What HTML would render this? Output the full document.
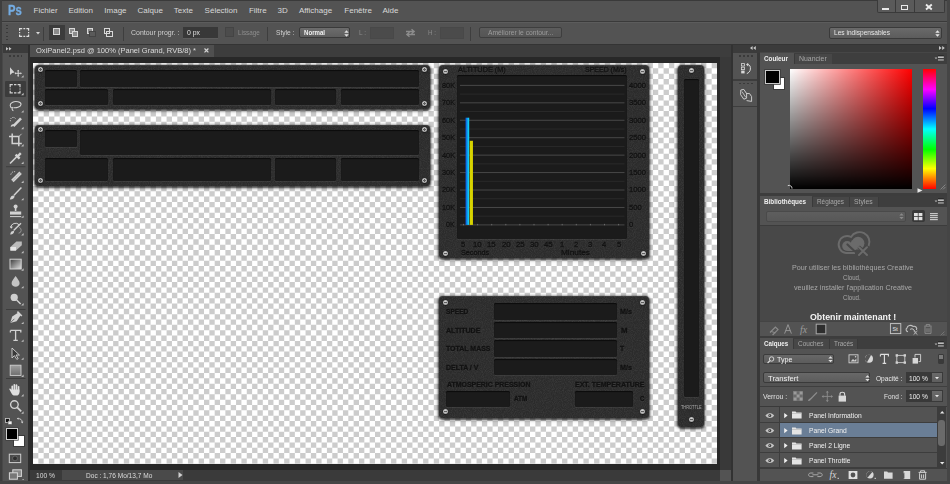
<!DOCTYPE html><html><head><meta charset="utf-8"><style>
*{box-sizing:border-box;margin:0;padding:0}
html,body{width:950px;height:484px;overflow:hidden;background:#535353}
body{position:relative;font-family:"Liberation Sans",sans-serif;font-size:8px;color:#d4d4d4}
.a{position:absolute}
svg.a{overflow:visible}
.t,.lb{position:absolute;white-space:nowrap;line-height:1;transform-origin:0 0}
.pn{position:absolute;background:#2b2b2b;border-radius:4px;box-shadow:0 1px 2px 1px rgba(0,0,0,.62),0 1px 4px 1px rgba(0,0,0,.25),inset 0 1px 0 rgba(255,255,255,.07)}
.sl{position:absolute;background:#1b1b1b;border-radius:1.5px;box-shadow:inset 0 1px 1px rgba(0,0,0,.6),0 1px 0 rgba(255,255,255,.06)}
.sc{position:absolute;width:5px;height:5px;border-radius:50%;background:radial-gradient(circle at 45% 40%,#d8d8d8,#a4a4a4 70%,#7a7a7a);box-shadow:0 0.5px 1.2px rgba(0,0,0,.85)}
.sc.h:before{content:"";position:absolute;left:1px;top:2px;width:3px;height:1px;background:#5e5e5e}
.sc.x:before{content:"";position:absolute;left:1px;top:2px;width:3px;height:1px;background:#5e5e5e}
.sc.x:after{content:"";position:absolute;left:2px;top:1px;width:1px;height:3px;background:#5e5e5e}
.sc.v:before{content:"";position:absolute;left:2px;top:1px;width:1px;height:3px;background:#6a6a6a}
.lb{color:#121212;-webkit-text-stroke:0.3px #121212;text-shadow:0 0.7px 0 rgba(255,255,255,.05)}
</style></head><body>
<div class="a" style="left:0px;top:0px;width:950px;height:1px;background:#3a3a3a;"></div>
<div class="a" style="left:0px;top:0px;width:2px;height:484px;background:#3e3e3e;"></div>
<div class="a" style="left:947px;top:0px;width:3px;height:484px;background:#454545;"></div>
<div class="a" style="left:0px;top:481px;width:950px;height:3px;background:#454545;"></div>
<div class="t" style="left:7.7px;top:2.85px;font-size:14px;color:#74ace2;font-weight:bold;transform:scaleX(0.806);-webkit-text-stroke:0.35px #74ace2;">Ps</div>
<div class="t" style="left:33.6px;top:7.23px;font-size:8px;color:#d8d8d8;">Fichier</div>
<div class="t" style="left:68.39999999999999px;top:7.23px;font-size:8px;color:#d8d8d8;">Edition</div>
<div class="t" style="left:104.3px;top:7.23px;font-size:8px;color:#d8d8d8;">Image</div>
<div class="t" style="left:137.5px;top:7.23px;font-size:8px;color:#d8d8d8;">Calque</div>
<div class="t" style="left:173.79999999999998px;top:7.23px;font-size:8px;color:#d8d8d8;">Texte</div>
<div class="t" style="left:204.6px;top:7.23px;font-size:8px;color:#d8d8d8;">Sélection</div>
<div class="t" style="left:248.9px;top:7.23px;font-size:8px;color:#d8d8d8;">Filtre</div>
<div class="t" style="left:277.5px;top:7.23px;font-size:8px;color:#d8d8d8;">3D</div>
<div class="t" style="left:298.90000000000003px;top:7.23px;font-size:8px;color:#d8d8d8;">Affichage</div>
<div class="t" style="left:344.3px;top:7.23px;font-size:8px;color:#d8d8d8;">Fenêtre</div>
<div class="t" style="left:382.40000000000003px;top:7.23px;font-size:8px;color:#d8d8d8;">Aide</div>
<div class="a" style="left:876.5px;top:0px;width:68.5px;height:12.5px;background:#5a5a5a;border:1px solid #3a3a3a;border-top:none;border-radius:0 0 2px 2px"></div>
<div class="a" style="left:895px;top:0px;width:1px;height:12.5px;background:#3a3a3a;"></div>
<div class="a" style="left:913.5px;top:0px;width:1px;height:12.5px;background:#3a3a3a;"></div>
<div class="a" style="left:882px;top:8px;width:7.3px;height:2px;background:#e8e8e8;"></div>
<div class="a" style="left:900.6px;top:5.2px;width:7.4px;height:5px;background:transparent;border:1.3px solid #e8e8e8;border-top-width:1.8px"></div>
<svg class="a" style="left:925px;top:4px" width="8" height="6"><path d="M1 0.6L6.8 5.4M6.8 0.6L1 5.4" stroke="#ececec" stroke-width="1.9"/></svg>
<div class="a" style="left:2px;top:21px;width:945px;height:1px;background:#3a3a3a;"></div>
<div class="a" style="left:2px;top:22px;width:945px;height:1px;background:#5c5c5c;"></div>
<div class="a" style="left:2px;top:44px;width:945px;height:1px;background:#343434;"></div>
<div class="a" style="left:6.4px;top:25.1px;width:1.4px;height:1.4px;background:#3a3a3a;"></div>
<div class="a" style="left:6.4px;top:28.1px;width:1.4px;height:1.4px;background:#3a3a3a;"></div>
<div class="a" style="left:6.4px;top:31.900000000000002px;width:1.4px;height:1.4px;background:#3a3a3a;"></div>
<div class="a" style="left:6.4px;top:35.699999999999996px;width:1.4px;height:1.4px;background:#3a3a3a;"></div>
<div class="a" style="left:6.4px;top:38.5px;width:1.4px;height:1.4px;background:#3a3a3a;"></div>
<svg class="a" style="left:18px;top:27px" width="12" height="11"><path d="M1.6 3.8V1.6H4.2M5.4 1.6H7.2M8.4 1.6H10.6V3.8M10.6 5V6.2M10.6 7.4V9.4H8.4M7.2 9.4H5.4M4.2 9.4H1.6V7.4M1.6 6.2V5" fill="none" stroke="#e0e0e0" stroke-width="1.2"/></svg>
<svg class="a" style="left:35.5px;top:31.5px" width="4" height="3"><path d="M0 0H4L2 2.5Z" fill="#d8d8d8"/></svg>
<div class="a" style="left:43.3px;top:26.5px;width:1px;height:14px;background:#3e3e3e;"></div>
<div class="a" style="left:49.2px;top:25.3px;width:15.4px;height:15.2px;background:#3b3b3b;"></div>
<div class="a" style="left:53px;top:28.2px;width:7px;height:6.5px;background:#8c8c8c;border:1px solid #d8d8d8"></div>
<div class="a" style="left:68.8px;top:28px;width:6.5px;height:5.8px;background:#8c8c8c;border:1px solid #d8d8d8"></div>
<div class="a" style="left:71.5px;top:30.8px;width:6.5px;height:6px;background:#8c8c8c;border:1px solid #d8d8d8"></div>
<div class="a" style="left:86.5px;top:28px;width:6.5px;height:5.8px;background:#8c8c8c;border:1px solid #d8d8d8"></div>
<div class="a" style="left:89.2px;top:30.8px;width:6.5px;height:6px;background:#5a5a5a;border:1px solid #444"></div>
<div class="a" style="left:103.8px;top:28px;width:6.5px;height:5.8px;background:transparent;border:1px solid #d8d8d8"></div>
<div class="a" style="left:106.3px;top:30.8px;width:6.5px;height:6px;background:transparent;border:1px solid #d8d8d8"></div>
<div class="a" style="left:123.3px;top:26.5px;width:1px;height:14px;background:#3e3e3e;"></div>
<div class="t" style="left:130.8px;top:29.12px;font-size:7px;color:#d0d0d0;transform:scaleX(0.995);">Contour progr. :</div>
<div class="a" style="left:183.4px;top:26.6px;width:34.8px;height:12px;background:#383838;border-bottom:1px solid #5d5d5d"></div>
<div class="t" style="left:186.6px;top:29.12px;font-size:7px;color:#e0e0e0;transform:scaleX(0.983);">0 px</div>
<div class="a" style="left:225.3px;top:27.4px;width:9px;height:9.6px;background:#4c4c4c;border:1px solid #444"></div>
<div class="t" style="left:238px;top:29.12px;font-size:7px;color:#8e8e8e;transform:scaleX(0.904);">Lissage</div>
<div class="a" style="left:267.3px;top:26.5px;width:1px;height:14px;background:#3e3e3e;"></div>
<div class="t" style="left:276px;top:29.12px;font-size:7px;color:#d0d0d0;transform:scaleX(0.951);">Style :</div>
<div class="a" style="left:299px;top:27px;width:51px;height:11.2px;background:linear-gradient(#6c6c6c,#5e5e5e);border:1px solid #3a3a3a;border-radius:2px"></div>
<div class="t" style="left:304px;top:29.12px;font-size:7px;color:#f0f0f0;font-weight:bold;transform:scaleX(0.871);">Normal</div>
<svg class="a" style="left:343.5px;top:29.5px" width="5" height="7"><path d="M0.3 2.8L2.5 0.3L4.7 2.8ZM0.3 4.2L2.5 6.7L4.7 4.2Z" fill="#e0e0e0"/></svg>
<div class="t" style="left:359.3px;top:29.12px;font-size:7px;color:#8a8a8a;transform:scaleX(0.931);">L :</div>
<div class="a" style="left:370.3px;top:27px;width:23.5px;height:11.5px;background:#4b4b4b;border:1px solid #484848"></div>
<svg class="a" style="left:404.5px;top:28px" width="11" height="10"><path d="M1 3.5H8.5M6.5 1.3L9.2 3.5L6.5 5.7M10 6.5H2.5M4.5 4.3L1.8 6.5L4.5 8.7" stroke="#8c8c8c" stroke-width="1.3" fill="none"/></svg>
<div class="t" style="left:427.7px;top:29.12px;font-size:7px;color:#8a8a8a;transform:scaleX(0.894);">H :</div>
<div class="a" style="left:440px;top:27px;width:24.2px;height:11.5px;background:#4b4b4b;border:1px solid #484848"></div>
<div class="a" style="left:470.4px;top:26.5px;width:1px;height:14px;background:#3e3e3e;"></div>
<div class="a" style="left:478.7px;top:26.7px;width:83.7px;height:11.5px;background:linear-gradient(#5c5c5c,#555);border:1px solid #3e3e3e;border-radius:2px"></div>
<div class="t" style="left:487.8px;top:29.12px;font-size:7px;color:#9c9c9c;transform:scaleX(0.959);">Améliorer le contour...</div>
<div class="a" style="left:829.1px;top:26.8px;width:112.7px;height:11.8px;background:linear-gradient(#6a6a6a,#5c5c5c);border:1px solid #3a3a3a;border-radius:2px"></div>
<div class="t" style="left:834.3px;top:29.37px;font-size:7px;color:#e8e8e8;transform:scaleX(0.941);">Les indispensables</div>
<svg class="a" style="left:935px;top:29.8px" width="5" height="7"><path d="M0.3 2.8L2.5 0.3L4.7 2.8ZM0.3 4.2L2.5 6.7L4.7 4.2Z" fill="#e8e8e8"/></svg>
<div class="a" style="left:28px;top:45px;width:703px;height:12px;background:#3d3d3d;"></div>
<div class="a" style="left:30px;top:45px;width:184px;height:12px;background:#4f4f4f;"></div>
<div class="t" style="left:36px;top:47.25px;font-size:7.5px;color:#dcdcdc;transform:scaleX(1.002);">OxiPanel2.psd @ 100% (Panel Grand, RVB/8) *</div>
<svg class="a" style="left:204.4px;top:48px" width="5" height="5"><path d="M0.5 0.5L4.4 4.4M4.4 0.5L0.5 4.4" stroke="#d4d4d4" stroke-width="1.2"/></svg>
<div class="a" style="left:2px;top:45px;width:26px;height:436px;background:#535353;border-left:1px solid #484848"></div>
<div class="a" style="left:3px;top:45px;width:25px;height:7.7px;background:#3b3b3b;"></div>
<svg class="a" style="left:5.7px;top:46.6px" width="6" height="4"><path d="M0 0L2.5 1.8L0 3.6ZM3 0L5.5 1.8L3 3.6Z" fill="#c8c8c8"/></svg>
<div class="a" style="left:8.9px;top:54.9px;width:1.9px;height:1.9px;background:#3a3a3a;"></div>
<div class="a" style="left:12.8px;top:54.9px;width:1.9px;height:1.9px;background:#3a3a3a;"></div>
<div class="a" style="left:16.7px;top:54.9px;width:1.9px;height:1.9px;background:#3a3a3a;"></div>
<div class="a" style="left:20.6px;top:54.9px;width:1.9px;height:1.9px;background:#3a3a3a;"></div>
<div class="a" style="left:28px;top:45px;width:2px;height:436px;background:#2e2e2e;"></div>
<div class="a" style="left:30px;top:57px;width:701px;height:413px;background:#282828;"></div>
<div class="a" style="left:720px;top:57px;width:11px;height:413px;background:#393939;"></div>
<svg class="a" style="left:33px;top:63px;overflow:hidden" width="684" height="401"><rect width="684" height="401" fill="#fff"/><path fill="#cccccc" fill-rule="evenodd" d="M5.344 0h5.344v401h-5.344zM16.032 0h5.344v401h-5.344zM26.720 0h5.344v401h-5.344zM37.408 0h5.344v401h-5.344zM48.096 0h5.344v401h-5.344zM58.784 0h5.344v401h-5.344zM69.472 0h5.344v401h-5.344zM80.160 0h5.344v401h-5.344zM90.848 0h5.344v401h-5.344zM101.536 0h5.344v401h-5.344zM112.224 0h5.344v401h-5.344zM122.912 0h5.344v401h-5.344zM133.600 0h5.344v401h-5.344zM144.288 0h5.344v401h-5.344zM154.976 0h5.344v401h-5.344zM165.664 0h5.344v401h-5.344zM176.352 0h5.344v401h-5.344zM187.040 0h5.344v401h-5.344zM197.728 0h5.344v401h-5.344zM208.416 0h5.344v401h-5.344zM219.104 0h5.344v401h-5.344zM229.792 0h5.344v401h-5.344zM240.480 0h5.344v401h-5.344zM251.168 0h5.344v401h-5.344zM261.856 0h5.344v401h-5.344zM272.544 0h5.344v401h-5.344zM283.232 0h5.344v401h-5.344zM293.920 0h5.344v401h-5.344zM304.608 0h5.344v401h-5.344zM315.296 0h5.344v401h-5.344zM325.984 0h5.344v401h-5.344zM336.672 0h5.344v401h-5.344zM347.360 0h5.344v401h-5.344zM358.048 0h5.344v401h-5.344zM368.736 0h5.344v401h-5.344zM379.424 0h5.344v401h-5.344zM390.112 0h5.344v401h-5.344zM400.800 0h5.344v401h-5.344zM411.488 0h5.344v401h-5.344zM422.176 0h5.344v401h-5.344zM432.864 0h5.344v401h-5.344zM443.552 0h5.344v401h-5.344zM454.240 0h5.344v401h-5.344zM464.928 0h5.344v401h-5.344zM475.616 0h5.344v401h-5.344zM486.304 0h5.344v401h-5.344zM496.992 0h5.344v401h-5.344zM507.680 0h5.344v401h-5.344zM518.368 0h5.344v401h-5.344zM529.056 0h5.344v401h-5.344zM539.744 0h5.344v401h-5.344zM550.432 0h5.344v401h-5.344zM561.120 0h5.344v401h-5.344zM571.808 0h5.344v401h-5.344zM582.496 0h5.344v401h-5.344zM593.184 0h5.344v401h-5.344zM603.872 0h5.344v401h-5.344zM614.560 0h5.344v401h-5.344zM625.248 0h5.344v401h-5.344zM635.936 0h5.344v401h-5.344zM646.624 0h5.344v401h-5.344zM657.312 0h5.344v401h-5.344zM668.000 0h5.344v401h-5.344zM678.688 0h5.344v401h-5.344zM0 5.344h684v5.344h-684zM0 16.032h684v5.344h-684zM0 26.720h684v5.344h-684zM0 37.408h684v5.344h-684zM0 48.096h684v5.344h-684zM0 58.784h684v5.344h-684zM0 69.472h684v5.344h-684zM0 80.160h684v5.344h-684zM0 90.848h684v5.344h-684zM0 101.536h684v5.344h-684zM0 112.224h684v5.344h-684zM0 122.912h684v5.344h-684zM0 133.600h684v5.344h-684zM0 144.288h684v5.344h-684zM0 154.976h684v5.344h-684zM0 165.664h684v5.344h-684zM0 176.352h684v5.344h-684zM0 187.040h684v5.344h-684zM0 197.728h684v5.344h-684zM0 208.416h684v5.344h-684zM0 219.104h684v5.344h-684zM0 229.792h684v5.344h-684zM0 240.480h684v5.344h-684zM0 251.168h684v5.344h-684zM0 261.856h684v5.344h-684zM0 272.544h684v5.344h-684zM0 283.232h684v5.344h-684zM0 293.920h684v5.344h-684zM0 304.608h684v5.344h-684zM0 315.296h684v5.344h-684zM0 325.984h684v5.344h-684zM0 336.672h684v5.344h-684zM0 347.360h684v5.344h-684zM0 358.048h684v5.344h-684zM0 368.736h684v5.344h-684zM0 379.424h684v5.344h-684zM0 390.112h684v5.344h-684zM0 400.800h684v5.344h-684z"/></svg>
<div class="a" style="left:30px;top:470px;width:701px;height:11px;background:#3a3a3a;"></div>
<div class="a" style="left:62px;top:470px;width:121px;height:10px;background:#4a4a4a;"></div>
<div class="a" style="left:720px;top:470px;width:11px;height:10.5px;background:#535353;"></div>
<div class="t" style="left:36.4px;top:471.87px;font-size:7px;color:#dcdcdc;transform:scaleX(0.957);">100 %</div>
<div class="t" style="left:86px;top:471.87px;font-size:7px;color:#dcdcdc;transform:scaleX(0.936);">Doc : 1,76 Mo/13,7 Mo</div>
<svg class="a" style="left:178px;top:472px" width="5" height="6"><path d="M0.5 0L4.5 3L0.5 6Z" fill="#d0d0d0"/></svg>
<div class="a" style="left:731px;top:45px;width:2px;height:436px;background:#323232;"></div>
<div class="a" style="left:733px;top:45px;width:214px;height:7.8px;background:#3b3b3b;"></div>
<div class="a" style="left:757px;top:53px;width:3px;height:428px;background:#383838;"></div>
<div class="a" style="left:5px;top:81.4px;width:21px;height:15.5px;background:#3c3c3c;border-radius:1px"></div>
<svg class="a" style="left:0;top:0" width="30" height="484"><path d="M23.6 75.2V77.6H21.2Z" fill="#c0c0c0"/><path d="M23.6 92.8V95.2H21.2Z" fill="#c0c0c0"/><path d="M23.6 110.2V112.6H21.2Z" fill="#c0c0c0"/><path d="M23.6 126.8V129.2H21.2Z" fill="#c0c0c0"/><path d="M23.6 144.0V146.4H21.2Z" fill="#c0c0c0"/><path d="M23.6 161.6V164.0H21.2Z" fill="#c0c0c0"/><path d="M23.6 180.5V182.9H21.2Z" fill="#c0c0c0"/><path d="M23.6 197.9V200.3H21.2Z" fill="#c0c0c0"/><path d="M23.6 215.4V217.8H21.2Z" fill="#c0c0c0"/><path d="M23.6 233.0V235.4H21.2Z" fill="#c0c0c0"/><path d="M23.6 250.8V253.2H21.2Z" fill="#c0c0c0"/><path d="M23.6 268.3V270.7H21.2Z" fill="#c0c0c0"/><path d="M23.6 285.9V288.3H21.2Z" fill="#c0c0c0"/><path d="M23.6 303.0V305.4H21.2Z" fill="#c0c0c0"/><path d="M23.6 321.7V324.1H21.2Z" fill="#c0c0c0"/><path d="M23.6 339.4V341.8H21.2Z" fill="#c0c0c0"/><path d="M23.6 357.4V359.8H21.2Z" fill="#c0c0c0"/><path d="M23.6 374.6V377.0H21.2Z" fill="#c0c0c0"/><path d="M23.6 394.1V396.5H21.2Z" fill="#c0c0c0"/><path d="M23.6 411.3V413.7H21.2Z" fill="#c0c0c0"/><path d="M10 67.2V75L12.2 72.9L14.6 72.6Z" fill="#d2d2d2" stroke="none" stroke-width="1.2" /><path d="M15 73.3H21.4M18.2 70.2V76.4" fill="none" stroke="#d2d2d2" stroke-width="1" /><path d="M14.6 73.3L16 72.2V74.4ZM21.8 73.3L20.4 72.2V74.4ZM18.2 69.8L17.1 71.2H19.3ZM18.2 76.8L17.1 75.4H19.3Z" fill="#d2d2d2" stroke="none" stroke-width="1.2" /><path d="M10.2 87.2V84.6H12.8M14 84.6H16.4M17.6 84.6H20V87.2M20 88.4V89.6M20 90.8V92.8H17.6M16.4 92.8H14M12.8 92.8H10.2V90.8M10.2 89.6V88.4" fill="none" stroke="#d2d2d2" stroke-width="1.2" /><path d="M12.6 108.3C9.5 107.5 9.4 103.8 12.2 102.4C15.5 100.6 21.5 101.6 21 104.6C20.6 107.2 16 108 13.5 107.6M12.8 107.2C11.6 108.4 12 110.2 13.4 110.6" fill="none" stroke="#d2d2d2" stroke-width="1.1" /><path d="M10.5 121.2A2.8 2.8 0 0 1 16 119.4" fill="none" stroke="#d2d2d2" stroke-width="1" stroke-dasharray="1.2 1"/><path d="M13.4 126.2L21 118.4" fill="none" stroke="#d2d2d2" stroke-width="2.6" /><path d="M10.6 126.6C11.4 124.4 12.6 123.8 14 124.6C13.4 126.2 12.2 127 10.6 126.6Z" fill="#d2d2d2" stroke="none" stroke-width="1.2" /><path d="M12.2 133.5V143.6H21.8M9 136.6H18.8V146.2" fill="none" stroke="#d2d2d2" stroke-width="1.5" /><path d="M18.8 136.6L21.6 133.8" fill="none" stroke="#d2d2d2" stroke-width="0.8" /><path d="M10 163.5L17.2 156.2" fill="none" stroke="#d2d2d2" stroke-width="1.6" /><path d="M15.6 154.6L19.6 158.6M17.5 156.5L20.8 153.2" fill="none" stroke="#d2d2d2" stroke-width="2.4" /><rect x="6" y="166.3" width="19.5" height="0.9" fill="#3c3c3c"/><path d="M10.8 174.6A3.6 3.6 0 0 1 15.4 171.8" fill="none" stroke="#d2d2d2" stroke-width="1" stroke-dasharray="1.2 1"/><path d="M12.4 181L20.6 172.8" fill="none" stroke="#d2d2d2" stroke-width="3.4" /><path d="M12.4 181L20.6 172.8" fill="none" stroke="#8a8a8a" stroke-width="0.8" stroke-dasharray="0.8 0.8"/><path d="M14 195.2L21.4 187.6" fill="none" stroke="#d2d2d2" stroke-width="1.5" /><path d="M9.8 199.6C10.4 196.6 11.8 195 14.6 195.6C14.8 198.2 12.6 199.8 9.8 199.6Z" fill="#d2d2d2" stroke="none" stroke-width="1.2" /><circle cx="15.6" cy="206.4" r="2" fill="#d2d2d2"/><path d="M14.8 208H16.4V211H14.8Z" fill="#d2d2d2" stroke="none" stroke-width="1.2" /><path d="M10 211.5H21.2V214.6H10Z" fill="#d2d2d2" stroke="none" stroke-width="1.2" /><path d="M10 216.6H21.2" fill="none" stroke="#d2d2d2" stroke-width="1" /><path d="M10.6 227.5A5 5 0 0 1 19.2 224.8" fill="none" stroke="#d2d2d2" stroke-width="1" /><path d="M9.8 226.2L11.2 228.8L13 226.8Z" fill="#d2d2d2" stroke="none" stroke-width="1.2" /><path d="M13.6 230.6L21 223.2" fill="none" stroke="#d2d2d2" stroke-width="1.4" /><path d="M10.2 234.4C10.6 231.8 12 230.6 14.2 231.2C14.2 233.4 12.4 234.6 10.2 234.4Z" fill="#d2d2d2" stroke="none" stroke-width="1.2" /><path d="M18.6 233.2A3 3 0 0 0 19.2 227.4" fill="none" stroke="#9a9a9a" stroke-width="0.9" /><path d="M10.4 247L16.4 241.6H21.8V245.2L16 250.6H10.4Z" fill="#bcbcbc" stroke="none" stroke-width="1.2" /><path d="M10.4 247H16V250.6H10.4Z" fill="#e6e6e6" stroke="none" stroke-width="1.2" /><defs><linearGradient id="gr" x1="0" y1="0" x2="1" y2="1"><stop offset="0" stop-color="#3a3a3a"/><stop offset="1" stop-color="#e0e0e0"/></linearGradient><linearGradient id="rc" x1="0" y1="0" x2="0" y2="1"><stop offset="0" stop-color="#a0a0a0"/><stop offset="1" stop-color="#6e6e6e"/></linearGradient></defs><rect x="10" y="259.2" width="11.2" height="9.8" fill="url(#gr)" stroke="#d2d2d2" stroke-width="1"/><path d="M15.6 276C13.6 279 11.6 281 11.6 283.2C11.6 285.4 13.4 286.8 15.6 286.8C17.8 286.8 19.6 285.4 19.6 283.2C19.6 281 17.6 279 15.6 276Z" fill="#c4c4c4" stroke="none" stroke-width="1.2" /><circle cx="14.2" cy="297.4" r="3.6" fill="#cfcfcf"/><path d="M16.6 300L20.6 304" fill="none" stroke="#d2d2d2" stroke-width="1.4" /><rect x="6" y="309" width="19.5" height="0.9" fill="#3c3c3c"/><path d="M10.2 323L12.2 316.6L18.4 312.6L20.8 315L16.6 321.2Z" fill="#d2d2d2" stroke="none" stroke-width="1.2" /><path d="M10.4 322.8L14.4 318.8" fill="none" stroke="#535353" stroke-width="0.8" /><path d="M17.4 311.6L21.8 316" fill="none" stroke="#d2d2d2" stroke-width="1.6" /><path d="M10.4 330.4H20.8V332.6M10.4 330.4V332.6M15.6 330.4V340.4M13.4 340.4H17.8" fill="none" stroke="#d2d2d2" stroke-width="1.3" /><path d="M12 348V358L14.4 355.6L16.8 359.4L18.2 358.6L16 355H19.4Z" fill="#3a3a3a" stroke="#d2d2d2" stroke-width="0.9" /><rect x="10.2" y="365.2" width="10.8" height="10.2" fill="url(#rc)" stroke="#d0d0d0" stroke-width="0.9"/><rect x="6" y="378" width="19.5" height="0.9" fill="#3c3c3c"/><g fill="#dedede"><rect x="11.4" y="385.6" width="1.7" height="6.5" rx="0.85"/><rect x="13.5" y="384" width="1.7" height="7.5" rx="0.85"/><rect x="15.6" y="384.3" width="1.7" height="7.5" rx="0.85"/><rect x="17.7" y="386" width="1.7" height="6.5" rx="0.85"/><path d="M11.4 389.5H19.4V392.4C19.4 394.4 18 395.6 16.2 395.6H14.6C13.2 395.6 12.4 394.8 11.6 393.4L9.4 389.6C9 388.8 9.8 388.2 10.5 388.8L11.6 390Z"/></g><circle cx="14.4" cy="404.6" r="3.8" fill="none" stroke="#d2d2d2" stroke-width="1.4"/><path d="M17.2 407.4L21.2 411.4" fill="none" stroke="#d2d2d2" stroke-width="1.8" /><rect x="5.4" y="418.4" width="4" height="4" fill="#111" stroke="#ccc" stroke-width="0.8"/><rect x="8" y="421" width="4" height="3.6" fill="#eee" stroke="#444" stroke-width="0.6"/><path d="M17.8 418.6C20.4 418.6 22.2 419.6 22.2 422.4" fill="none" stroke="#d2d2d2" stroke-width="0.9" /><path d="M16.8 418.6L18.4 417.4V419.8Z M21 421.8H23.4L22.2 423.6Z" fill="#d2d2d2" stroke="none" stroke-width="0.5" /><rect x="9.3" y="454.2" width="11.4" height="8.4" fill="#4a4a4a" stroke="#d0d0d0" stroke-width="1"/><circle cx="15" cy="458.4" r="2.4" fill="#2e2e2e" stroke="#888" stroke-width="0.5"/><rect x="12.8" y="469.8" width="8.6" height="6.6" fill="#888" stroke="#d8d8d8" stroke-width="1"/><rect x="9.4" y="472.8" width="8" height="6.4" fill="#777" stroke="#d8d8d8" stroke-width="1"/><rect x="22.6" y="479" width="1" height="1" fill="#ccc"/></svg>
<div class="a" style="left:12.7px;top:435px;width:12.2px;height:12.3px;background:#fff;border:1px solid #3a3a3a"></div>
<div class="a" style="left:5.8px;top:428.2px;width:12.3px;height:12.3px;background:#000;border:1px solid #d0d0d0;box-shadow:0 0 0 0.6px #3a3a3a"></div>
<svg width="0" height="0" style="position:absolute"><filter id="nz" x="0" y="0" width="100%" height="100%"><feTurbulence type="fractalNoise" baseFrequency="1.1" numOctaves="1" seed="3"/><feColorMatrix values="0 0 0 0 1  0 0 0 0 1  0 0 0 0 1  0.16 0 0 0 -0.06"/></filter></svg>
<div class="pn" style="left:35px;top:65px;width:395.40px;height:43.80px"><svg width="100%" height="100%" style="position:absolute;left:0;top:0;border-radius:4px"><rect width="100%" height="100%" filter="url(#nz)" rx="4"/></svg></div>
<div class="sl" style="left:45px;top:69.8px;width:32.00px;height:16.80px"></div>
<div class="sl" style="left:79.7px;top:69.8px;width:339.80px;height:16.80px"></div>
<div class="sl" style="left:45px;top:88.6px;width:63.00px;height:16.60px"></div>
<div class="sl" style="left:113px;top:88.6px;width:157.50px;height:16.60px"></div>
<div class="sl" style="left:274.8px;top:88.6px;width:60.80px;height:16.60px"></div>
<div class="sl" style="left:340.8px;top:88.6px;width:78.70px;height:16.60px"></div>
<div class="sc x" style="left:38.00px;top:67.30px"></div>
<div class="sc x" style="left:38.00px;top:101.30px"></div>
<div class="sc x" style="left:421.90px;top:67.30px"></div>
<div class="sc x" style="left:421.90px;top:101.30px"></div>
<div class="pn" style="left:35px;top:125.4px;width:395.40px;height:60.30px"><svg width="100%" height="100%" style="position:absolute;left:0;top:0;border-radius:4px"><rect width="100%" height="100%" filter="url(#nz)" rx="4"/></svg></div>
<div class="sl" style="left:45px;top:130px;width:32.00px;height:16.50px"></div>
<div class="sl" style="left:79.7px;top:129.8px;width:339.80px;height:25.40px"></div>
<div class="sl" style="left:45px;top:157.6px;width:63.00px;height:23.60px"></div>
<div class="sl" style="left:113px;top:157.6px;width:157.50px;height:23.60px"></div>
<div class="sl" style="left:274.8px;top:157.6px;width:60.80px;height:23.60px"></div>
<div class="sl" style="left:340.8px;top:157.6px;width:78.70px;height:23.60px"></div>
<div class="sc x" style="left:38.00px;top:127.10px"></div>
<div class="sc x" style="left:38.00px;top:177.80px"></div>
<div class="sc x" style="left:421.90px;top:127.10px"></div>
<div class="sc x" style="left:421.90px;top:177.80px"></div>
<div class="pn" style="left:438.6px;top:64.6px;width:210.00px;height:193.20px"><svg width="100%" height="100%" style="position:absolute;left:0;top:0;border-radius:4px"><rect width="100%" height="100%" filter="url(#nz)" rx="4"/></svg></div>
<div class="sl" style="left:457.2px;top:75.2px;width:169.60px;height:163.60px"></div>
<svg class="a" style="left:0;top:0" width="950" height="484"><rect x="460" y="224.40" width="164.5" height="1" fill="#484848"/><rect x="460" y="215.68" width="164.5" height="1" fill="#2a2a2a"/><rect x="460" y="206.96" width="164.5" height="1" fill="#484848"/><rect x="460" y="198.24" width="164.5" height="1" fill="#2a2a2a"/><rect x="460" y="189.52" width="164.5" height="1" fill="#484848"/><rect x="460" y="180.80" width="164.5" height="1" fill="#2a2a2a"/><rect x="460" y="172.08" width="164.5" height="1" fill="#484848"/><rect x="460" y="163.36" width="164.5" height="1" fill="#2a2a2a"/><rect x="460" y="154.64" width="164.5" height="1" fill="#484848"/><rect x="460" y="145.92" width="164.5" height="1" fill="#2a2a2a"/><rect x="460" y="137.20" width="164.5" height="1" fill="#484848"/><rect x="460" y="128.48" width="164.5" height="1" fill="#2a2a2a"/><rect x="460" y="119.76" width="164.5" height="1" fill="#484848"/><rect x="460" y="111.04" width="164.5" height="1" fill="#2a2a2a"/><rect x="460" y="102.32" width="164.5" height="1" fill="#484848"/><rect x="460" y="93.60" width="164.5" height="1" fill="#2a2a2a"/><rect x="460" y="84.88" width="164.5" height="1" fill="#484848"/><rect x="463.00" y="223.9" width="1" height="1.4" fill="#6a6a6a"/><rect x="477.10" y="223.9" width="1" height="1.4" fill="#6a6a6a"/><rect x="491.20" y="223.9" width="1" height="1.4" fill="#6a6a6a"/><rect x="505.30" y="223.9" width="1" height="1.4" fill="#6a6a6a"/><rect x="519.40" y="223.9" width="1" height="1.4" fill="#6a6a6a"/><rect x="533.50" y="223.9" width="1" height="1.4" fill="#6a6a6a"/><rect x="547.60" y="223.9" width="1" height="1.4" fill="#6a6a6a"/><rect x="561.70" y="223.9" width="1" height="1.4" fill="#6a6a6a"/><rect x="575.80" y="223.9" width="1" height="1.4" fill="#6a6a6a"/><rect x="589.90" y="223.9" width="1" height="1.4" fill="#6a6a6a"/><rect x="604.00" y="223.9" width="1" height="1.4" fill="#6a6a6a"/><rect x="618.10" y="223.9" width="1" height="1.4" fill="#6a6a6a"/><defs><linearGradient id="bl" x1="0" x2="1"><stop offset="0" stop-color="#0a4fd8"/><stop offset="1" stop-color="#12e6ff"/></linearGradient><linearGradient id="yl" x1="0" x2="1"><stop offset="0" stop-color="#9c9a00"/><stop offset=".3" stop-color="#e0dc00"/><stop offset="1" stop-color="#c8c400"/></linearGradient></defs><rect x="465.5" y="117.7" width="3.7" height="107.2" fill="url(#bl)"/><rect x="469.6" y="140.8" width="3.4" height="84.1" fill="url(#yl)"/></svg>
<div class="lb" style="left:457.7px;top:66.48px;font-size:7.5px;color:#121212;transform:scaleX(0.975);">ALTITUDE (M)</div>
<div class="lb" style="left:585.0px;top:66.48px;font-size:7.5px;color:#121212;transform:scaleX(0.931);">SPEED (M/s)</div>
<div class="lb" style="left:446.29999999999995px;top:221.28px;font-size:7.5px;color:#121212;transform:scaleX(0.937);">0K</div>
<div class="lb" style="left:441.9px;top:203.84px;font-size:7.5px;color:#121212;transform:scaleX(0.974);">10K</div>
<div class="lb" style="left:441.9px;top:186.41px;font-size:7.5px;color:#121212;transform:scaleX(0.974);">20K</div>
<div class="lb" style="left:441.9px;top:168.96px;font-size:7.5px;color:#121212;transform:scaleX(0.974);">30K</div>
<div class="lb" style="left:441.9px;top:151.52px;font-size:7.5px;color:#121212;transform:scaleX(0.974);">40K</div>
<div class="lb" style="left:441.9px;top:134.08px;font-size:7.5px;color:#121212;transform:scaleX(0.974);">50K</div>
<div class="lb" style="left:441.9px;top:116.64px;font-size:7.5px;color:#121212;transform:scaleX(0.974);">60K</div>
<div class="lb" style="left:441.9px;top:99.20px;font-size:7.5px;color:#121212;transform:scaleX(0.974);">70K</div>
<div class="lb" style="left:441.9px;top:81.77px;font-size:7.5px;color:#121212;transform:scaleX(0.974);">80K</div>
<div class="lb" style="left:629.3px;top:221.28px;font-size:7.5px;color:#121212;transform:scaleX(1.007);">0</div>
<div class="lb" style="left:629.3px;top:203.84px;font-size:7.5px;color:#121212;transform:scaleX(1.007);">500</div>
<div class="lb" style="left:629.3px;top:186.41px;font-size:7.5px;color:#121212;transform:scaleX(1.019);">1000</div>
<div class="lb" style="left:629.3px;top:168.96px;font-size:7.5px;color:#121212;transform:scaleX(1.019);">1500</div>
<div class="lb" style="left:629.3px;top:151.52px;font-size:7.5px;color:#121212;transform:scaleX(1.019);">2000</div>
<div class="lb" style="left:629.3px;top:134.08px;font-size:7.5px;color:#121212;transform:scaleX(1.019);">2500</div>
<div class="lb" style="left:629.3px;top:116.64px;font-size:7.5px;color:#121212;transform:scaleX(1.019);">3000</div>
<div class="lb" style="left:629.3px;top:99.20px;font-size:7.5px;color:#121212;transform:scaleX(1.019);">3500</div>
<div class="lb" style="left:629.3px;top:81.77px;font-size:7.5px;color:#121212;transform:scaleX(1.019);">4000</div>
<div class="lb" style="left:461.4px;top:240.88px;font-size:7.5px;color:#121212;transform:scaleX(1.007);">5</div>
<div class="lb" style="left:473.3px;top:240.88px;font-size:7.5px;color:#121212;transform:scaleX(1.031);">10</div>
<div class="lb" style="left:487.4px;top:240.88px;font-size:7.5px;color:#121212;transform:scaleX(1.031);">15</div>
<div class="lb" style="left:501.5px;top:240.88px;font-size:7.5px;color:#121212;transform:scaleX(1.031);">20</div>
<div class="lb" style="left:515.6px;top:240.88px;font-size:7.5px;color:#121212;transform:scaleX(1.031);">25</div>
<div class="lb" style="left:529.7px;top:240.88px;font-size:7.5px;color:#121212;transform:scaleX(1.031);">30</div>
<div class="lb" style="left:543.8000000000001px;top:240.88px;font-size:7.5px;color:#121212;transform:scaleX(1.031);">45</div>
<div class="lb" style="left:560.1px;top:240.88px;font-size:7.5px;color:#121212;transform:scaleX(1.007);">1</div>
<div class="lb" style="left:574.1999999999999px;top:240.88px;font-size:7.5px;color:#121212;transform:scaleX(1.007);">2</div>
<div class="lb" style="left:588.3px;top:240.88px;font-size:7.5px;color:#121212;transform:scaleX(1.007);">3</div>
<div class="lb" style="left:602.4px;top:240.88px;font-size:7.5px;color:#121212;transform:scaleX(1.007);">4</div>
<div class="lb" style="left:616.5px;top:240.88px;font-size:7.5px;color:#121212;transform:scaleX(1.007);">5</div>
<div class="lb" style="left:460.6px;top:248.98px;font-size:7.5px;color:#121212;transform:scaleX(0.963);">Seconds</div>
<div class="lb" style="left:560.7px;top:248.98px;font-size:7.5px;color:#121212;transform:scaleX(1.100);">Minutes</div>
<div class="sc h" style="left:442.80px;top:68.50px"></div>
<div class="sc h" style="left:640.30px;top:68.50px"></div>
<div class="sc h" style="left:443.20px;top:250.60px"></div>
<div class="sc h" style="left:640.80px;top:250.60px"></div>
<div class="pn" style="left:438.5px;top:296.4px;width:210.50px;height:121.40px"><svg width="100%" height="100%" style="position:absolute;left:0;top:0;border-radius:4px"><rect width="100%" height="100%" filter="url(#nz)" rx="4"/></svg></div>
<div class="sl" style="left:494.1px;top:303.1px;width:122.60px;height:16.60px"></div>
<div class="sl" style="left:494.1px;top:321.9px;width:122.60px;height:15.90px"></div>
<div class="sl" style="left:494.1px;top:340.4px;width:122.60px;height:16.20px"></div>
<div class="sl" style="left:494.1px;top:359px;width:122.60px;height:16.40px"></div>
<div class="sl" style="left:446px;top:391px;width:63.70px;height:15.60px"></div>
<div class="sl" style="left:574.9px;top:390.9px;width:57.90px;height:15.80px"></div>
<div class="lb" style="left:445.6px;top:307.88px;font-size:7.5px;color:#121212;font-weight:bold;transform:scaleX(0.877);">SPEED</div>
<div class="lb" style="left:445.6px;top:326.99px;font-size:7.5px;color:#121212;font-weight:bold;transform:scaleX(0.942);">ALTITUDE</div>
<div class="lb" style="left:445.6px;top:345.08px;font-size:7.5px;color:#121212;font-weight:bold;transform:scaleX(0.927);">TOTAL MASS</div>
<div class="lb" style="left:445.6px;top:363.69px;font-size:7.5px;color:#121212;font-weight:bold;transform:scaleX(0.929);">DELTA / V</div>
<div class="lb" style="left:446.5px;top:380.69px;font-size:7.5px;color:#121212;font-weight:bold;transform:scaleX(0.925);">ATMOSPERIC PRESSION</div>
<div class="lb" style="left:514.3px;top:395.08px;font-size:7.5px;color:#121212;font-weight:bold;transform:scaleX(0.841);">ATM</div>
<div class="lb" style="left:574.9px;top:381.08px;font-size:7.5px;color:#121212;font-weight:bold;transform:scaleX(0.933);">EXT. TEMPERATURE</div>
<div class="lb" style="left:639.6px;top:395.19px;font-size:7.5px;color:#121212;font-weight:bold;transform:scaleX(0.812);">C</div>
<div class="lb" style="left:620px;top:308.08px;font-size:7.5px;color:#121212;font-weight:bold;transform:scaleX(0.960);">M/s</div>
<div class="lb" style="left:620.5px;top:327.19px;font-size:7.5px;color:#121212;font-weight:bold;transform:scaleX(1.040);">M</div>
<div class="lb" style="left:620px;top:344.99px;font-size:7.5px;color:#121212;font-weight:bold;transform:scaleX(0.917);">T</div>
<div class="lb" style="left:620px;top:364.38px;font-size:7.5px;color:#121212;font-weight:bold;transform:scaleX(0.960);">M/s</div>
<div class="sc h" style="left:442.70px;top:300.20px"></div>
<div class="sc h" style="left:640.30px;top:300.20px"></div>
<div class="sc h" style="left:442.90px;top:408.90px"></div>
<div class="sc h" style="left:640.30px;top:408.90px"></div>
<div class="pn" style="left:678px;top:64.7px;width:26.00px;height:362.40px"><svg width="100%" height="100%" style="position:absolute;left:0;top:0;border-radius:4px"><rect width="100%" height="100%" filter="url(#nz)" rx="4"/></svg></div>
<div class="sl" style="left:683.6px;top:78.8px;width:15.00px;height:317.90px"></div>
<div class="t" style="left:681px;top:404.59px;font-size:5px;color:#a8a8a8;transform:scaleX(0.777);">THROTTLE</div>
<div class="sc h" style="left:688.50px;top:68.10px"></div>
<div class="sc h" style="left:688.50px;top:417.40px"></div>
<svg class="a" style="left:749.5px;top:46px" width="6" height="4"><path d="M2.6 0L0 2L2.6 4ZM5.8 0L3.2 2L5.8 4Z" fill="#c8c8c8"/></svg>
<svg class="a" style="left:938.5px;top:46px" width="6" height="4"><path d="M0 0L2.6 2L0 4ZM3.2 0L5.8 2L3.2 4Z" fill="#c8c8c8"/></svg>
<div class="a" style="left:733px;top:53px;width:24px;height:27px;background:#535353;"></div>
<div class="a" style="left:733px;top:79.4px;width:24px;height:1.2px;background:#3d3d3d;"></div>
<div class="a" style="left:733px;top:80.6px;width:24px;height:26px;background:#535353;"></div>
<div class="a" style="left:733px;top:106.4px;width:24px;height:1px;background:#3d3d3d;"></div>
<div class="a" style="left:739.4px;top:55.1px;width:1.8px;height:1.8px;background:#3a3a3a;"></div>
<div class="a" style="left:743.3px;top:55.1px;width:1.8px;height:1.8px;background:#3a3a3a;"></div>
<div class="a" style="left:747.2px;top:55.1px;width:1.8px;height:1.8px;background:#3a3a3a;"></div>
<div class="a" style="left:751.1px;top:55.1px;width:1.8px;height:1.8px;background:#3a3a3a;"></div>
<div class="a" style="left:739.4px;top:82.69999999999999px;width:1.8px;height:1.8px;background:#3a3a3a;"></div>
<div class="a" style="left:743.3px;top:82.69999999999999px;width:1.8px;height:1.8px;background:#3a3a3a;"></div>
<div class="a" style="left:747.2px;top:82.69999999999999px;width:1.8px;height:1.8px;background:#3a3a3a;"></div>
<div class="a" style="left:751.1px;top:82.69999999999999px;width:1.8px;height:1.8px;background:#3a3a3a;"></div>
<svg class="a" style="left:733px;top:53px" width="24" height="60"><rect x="8.4" y="10.6" width="3" height="2.4" fill="none" stroke="#d8d8d8" stroke-width="0.8"/><rect x="8.4" y="14.2" width="3" height="2.4" fill="none" stroke="#d8d8d8" stroke-width="0.8"/><rect x="8.2" y="17.6" width="3.4" height="2.8" fill="#d8d8d8"/><path d="M14.4 11.4C17 11.4 17.6 14 17.4 16C17.2 18.4 15.6 20 13.8 20.6" fill="none" stroke="#d8d8d8" stroke-width="1"/><path d="M13 11.6L15.2 9.8V13.4Z" fill="#d8d8d8"/><path d="M7.8 37L10.8 36.4L13.6 40.6V45.2L10.8 46.2L7.6 41.6Z M13.2 40.4L16.6 40.6L18.6 43.6V48.4L13.6 47.6" fill="none" stroke="#d8d8d8" stroke-width="0.9"/><path d="M9 38.6L12.8 44.4" stroke="#d8d8d8" stroke-width="0.8"/></svg>
<div class="a" style="left:760px;top:53px;width:187px;height:11px;background:#3e3e3e;"></div>
<div class="a" style="left:760px;top:52.3px;width:187px;height:0.9px;background:#464646;"></div>
<div class="a" style="left:760px;top:53px;width:33.7px;height:11px;background:#535353;"></div>
<div class="a" style="left:793.7px;top:53.5px;width:38.3px;height:10.5px;background:#474747;border-left:1px solid #3a3a3a"></div>
<div class="t" style="left:764.2px;top:54.95px;font-size:7.5px;color:#f0f0f0;font-weight:bold;transform:scaleX(0.844);">Couleur</div>
<div class="t" style="left:798.6px;top:54.95px;font-size:7.5px;color:#a8a8a8;transform:scaleX(0.923);">Nuancier</div>
<svg class="a" style="left:934px;top:55px" width="11" height="7"><path d="M0.6 2.6H3.4L2 4.2Z" fill="#b0b0b0"/><rect x="4" y="0.4" width="5.8" height="0.9" fill="#1e1e1e"/><rect x="4" y="1.4" width="5.8" height="1.6" fill="#bdbdbd"/><rect x="4" y="4.4" width="5.8" height="1.1" fill="#bdbdbd"/></svg>
<div class="a" style="left:760px;top:64px;width:187px;height:129px;background:#535353;"></div>
<div class="a" style="left:772.8px;top:77.4px;width:12.4px;height:12.8px;background:#fff;border:1px solid #3a3a3a"></div>
<div class="a" style="left:765.4px;top:70.3px;width:14.3px;height:13.7px;background:#000;border:1.2px solid #c8c8c8;box-shadow:0 0 0 0.8px #3c3c3c"></div>
<div class="a" style="left:789.8px;top:68.7px;width:122.5px;height:120.3px;background:linear-gradient(to top,#000,rgba(0,0,0,0)),linear-gradient(to right,#fff,#f00);"></div>
<svg class="a" style="left:787px;top:185px" width="6" height="6"><path d="M0.8 0.6A3 3 0 0 1 5 3.6" fill="none" stroke="#e0e0e0" stroke-width="0.9"/></svg>
<div class="a" style="left:922.8px;top:68.7px;width:13.6px;height:120.3px;background:linear-gradient(#f00 0%,#f0f 17%,#00f 33%,#0ff 50%,#0f0 67%,#ff0 83%,#f00 100%);"></div>
<svg class="a" style="left:916.5px;top:186.5px" width="6" height="7"><path d="M0.5 1.2L0.5 5.8L5.5 3.5Z" fill="#e8e8e8"/></svg>
<svg class="a" style="left:940px;top:184px" width="6" height="6"><path d="M5.4 0.6L0.6 5.4M5.4 3L3 5.4" stroke="#9a9a9a" stroke-width="0.7"/></svg>
<div class="a" style="left:760px;top:193px;width:187px;height:3px;background:#3d3d3d;"></div>
<div class="a" style="left:760px;top:196px;width:187px;height:10.6px;background:#3e3e3e;"></div>
<div class="a" style="left:760px;top:196px;width:51.6px;height:10.6px;background:#535353;"></div>
<div class="a" style="left:811.6px;top:196.5px;width:37.4px;height:10.1px;background:#474747;border-left:1px solid #3a3a3a"></div>
<div class="a" style="left:849px;top:196.5px;width:30px;height:10.1px;background:#474747;border-left:1px solid #3a3a3a;border-right:1px solid #3a3a3a"></div>
<div class="t" style="left:764.4px;top:197.75px;font-size:7.5px;color:#f0f0f0;font-weight:bold;transform:scaleX(0.847);">Bibliothèques</div>
<div class="t" style="left:817px;top:197.75px;font-size:7.5px;color:#a8a8a8;transform:scaleX(0.852);">Réglages</div>
<div class="t" style="left:854.4px;top:197.75px;font-size:7.5px;color:#a8a8a8;transform:scaleX(0.911);">Styles</div>
<svg class="a" style="left:934px;top:198px" width="11" height="7"><path d="M0.6 2.6H3.4L2 4.2Z" fill="#b0b0b0"/><rect x="4" y="0.4" width="5.8" height="0.9" fill="#1e1e1e"/><rect x="4" y="1.4" width="5.8" height="1.6" fill="#bdbdbd"/><rect x="4" y="4.4" width="5.8" height="1.1" fill="#bdbdbd"/></svg>
<div class="a" style="left:760px;top:206.6px;width:187px;height:18.6px;background:#535353;"></div>
<div class="a" style="left:765.7px;top:210.7px;width:140.6px;height:11px;background:linear-gradient(#5e5e5e,#585858);border:1px solid #4a4a4a;border-radius:2px"></div>
<svg class="a" style="left:899px;top:213px" width="5" height="7"><path d="M0.3 2.6L2.5 0.3L4.7 2.6ZM0.3 3.9L2.5 6.2L4.7 3.9Z" fill="#8a8a8a"/></svg>
<div class="a" style="left:911.5px;top:210px;width:13.5px;height:12px;background:#383838;border-radius:2px"></div>
<svg class="a" style="left:914px;top:212.5px" width="9" height="8"><rect x="0" y="0" width="3.8" height="3.2" fill="#e0e0e0"/><rect x="4.6" y="0" width="3.8" height="3.2" fill="#e0e0e0"/><rect x="0" y="4" width="3.8" height="3.2" fill="#e0e0e0"/><rect x="4.6" y="4" width="3.8" height="3.2" fill="#e0e0e0"/></svg>
<svg class="a" style="left:929.5px;top:212.5px" width="8" height="8"><rect y="0" width="7.8" height="1.2" fill="#c8c8c8"/><rect y="2" width="7.8" height="1.2" fill="#c8c8c8"/><rect y="4" width="7.8" height="1.2" fill="#c8c8c8"/><rect y="6" width="7.8" height="1.2" fill="#c8c8c8"/></svg>
<div class="a" style="left:760px;top:225px;width:187px;height:1px;background:#3c3c3c;"></div>
<div class="a" style="left:760px;top:226px;width:187px;height:95px;background:#484848;"></div>
<svg class="a" style="left:830px;top:226px" width="50" height="36"><path d="M25 27H16A8.5 8.5 0 1 1 21 11A9.9 9.9 0 0 1 38.6 20" fill="none" stroke="#6b6b6b" stroke-width="1.9"/><g fill="#6b6b6b"><circle cx="17.2" cy="20" r="5"/><circle cx="28" cy="17.2" r="6.4"/><path d="M17.2 25H24L30 21L22 14Z"/></g><path d="M17.4 18.4L25 25.4" stroke="#484848" stroke-width="2.1" stroke-linecap="round"/><path d="M28.6 20.8L37.4 29.4M37.4 20.8L28.6 29.4" stroke="#484848" stroke-width="3.6"/><path d="M29 21.2L37 29M37 21.2L29 29" stroke="#6b6b6b" stroke-width="1.9" stroke-linecap="round"/></svg>
<div class="t" style="left:791.5px;top:264.25px;font-size:7.5px;color:#a8a8a8;transform:scaleX(0.953);">Pour utiliser les bibliothèques Creative</div>
<div class="t" style="left:842.6px;top:273.75px;font-size:7.5px;color:#a8a8a8;transform:scaleX(0.812);">Cloud,</div>
<div class="t" style="left:794.2px;top:284.45px;font-size:7.5px;color:#a8a8a8;transform:scaleX(0.952);">veuillez installer l'application Creative</div>
<div class="t" style="left:843.0px;top:294.25px;font-size:7.5px;color:#a8a8a8;transform:scaleX(0.812);">Cloud.</div>
<div class="t" style="left:809.7px;top:313.32px;font-size:8.6px;color:#f4f4f4;font-weight:bold;transform:scaleX(1.027);">Obtenir maintenant !</div>
<div class="a" style="left:760px;top:321px;width:187px;height:14.6px;background:#535353;border-top:1px solid #444"></div>
<svg class="a" style="left:760px;top:321px" width="187" height="15"><path d="M10 11.5L15.4 6L18 8.6L12.6 14" fill="none" stroke="#8a8a8a" stroke-width="1.2"/><path d="M10.8 10.4L15.6 11.8" stroke="#8a8a8a" stroke-width="1"/><path d="M24.6 12.6L28 3.6L31.4 12.6M25.8 9.6H30.2" fill="none" stroke="#9c9c9c" stroke-width="0.9"/><text x="40" y="11.6" font-family="Liberation Serif" font-style="italic" font-size="10" fill="#9c9c9c">fx</text><rect x="56.2" y="3.2" width="9.6" height="9.6" fill="#2e2e2e" stroke="#a8a8a8" stroke-width="1"/><rect x="130.4" y="2.6" width="10.4" height="10" fill="none" stroke="#c8c8c8" stroke-width="0.9"/><text x="132.4" y="10.2" font-family="Liberation Sans" font-weight="bold" font-size="5.5" fill="#c8c8c8">St</text><path d="M148 10.6C146 10.6 145.4 8 147 7C147.4 4.4 151 3.6 153 5.4C155.2 4.6 157.6 6.6 156.4 9" fill="none" stroke="#c0c0c0" stroke-width="1.1"/><path d="M150 8.6C151 7.4 153 7.6 154 9L155.4 11" fill="none" stroke="#c0c0c0" stroke-width="1"/><path d="M153.6 10L157.4 13.6M157.4 10L153.6 13.6" stroke="#c0c0c0" stroke-width="0.9"/><path d="M164.2 5.2H171.8M166.2 5V3.6H169.8V5M165 6V12.4H171V6M167 7.2V11.2M169 7.2V11.2" fill="none" stroke="#8e8e8e" stroke-width="0.9"/><path d="M184.4 10.6L180.6 14.4M184.4 13L183 14.4" stroke="#8a8a8a" stroke-width="0.6"/></svg>
<div class="a" style="left:760px;top:335.6px;width:187px;height:2.6px;background:#3d3d3d;"></div>
<div class="a" style="left:760px;top:338.2px;width:187px;height:10.8px;background:#3e3e3e;"></div>
<div class="a" style="left:760px;top:338.2px;width:33px;height:10.8px;background:#535353;"></div>
<div class="a" style="left:793px;top:338.7px;width:35.5px;height:10.3px;background:#474747;border-left:1px solid #3a3a3a"></div>
<div class="a" style="left:828.5px;top:338.7px;width:29.5px;height:10.3px;background:#474747;border-left:1px solid #3a3a3a;border-right:1px solid #3a3a3a"></div>
<div class="t" style="left:764.2px;top:340.25px;font-size:7.5px;color:#f0f0f0;font-weight:bold;transform:scaleX(0.826);">Calques</div>
<div class="t" style="left:797.7px;top:340.25px;font-size:7.5px;color:#a8a8a8;transform:scaleX(0.861);">Couches</div>
<div class="t" style="left:834px;top:340.25px;font-size:7.5px;color:#a8a8a8;transform:scaleX(0.848);">Tracés</div>
<svg class="a" style="left:934px;top:340.5px" width="11" height="7"><path d="M0.6 2.6H3.4L2 4.2Z" fill="#b0b0b0"/><rect x="4" y="0.4" width="5.8" height="0.9" fill="#1e1e1e"/><rect x="4" y="1.4" width="5.8" height="1.6" fill="#bdbdbd"/><rect x="4" y="4.4" width="5.8" height="1.1" fill="#bdbdbd"/></svg>
<div class="a" style="left:760px;top:349px;width:187px;height:132px;background:#535353;"></div>
<div class="a" style="left:762.8px;top:354px;width:71.2px;height:10.3px;background:linear-gradient(#676767,#5c5c5c);border:1px solid #3c3c3c;border-radius:2px"></div>
<svg class="a" style="left:767px;top:355.5px" width="8" height="8"><circle cx="4.6" cy="3" r="2.2" fill="none" stroke="#e0e0e0" stroke-width="0.9"/><path d="M3 4.6L0.6 7" stroke="#e0e0e0" stroke-width="1.1"/></svg>
<div class="t" style="left:777px;top:355.65px;font-size:7.5px;color:#f0f0f0;transform:scaleX(0.953);">Type</div>
<svg class="a" style="left:827.5px;top:356px" width="5" height="7"><path d="M0.3 2.6L2.5 0.3L4.7 2.6ZM0.3 3.9L2.5 6.2L4.7 3.9Z" fill="#e0e0e0"/></svg>
<svg class="a" style="left:848px;top:353px" width="100" height="13"><rect x="1" y="1.8" width="9" height="8" fill="none" stroke="#d0d0d0" stroke-width="0.9"/><path d="M2.6 8.4L5 6L6.6 7.4L8.4 5.6V8.4Z" fill="#d0d0d0"/><circle cx="7.6" cy="3.8" r="0.8" fill="#d0d0d0"/><circle cx="21" cy="5.8" r="4" fill="#d8d8d8"/><path d="M21 1.8A4 4 0 0 0 21 9.8Z" fill="#555" transform="rotate(30 21 5.8)"/><path d="M32.4 1.4H40.4V3.6M32.4 1.4V3.6M36.4 1.4V10.4M34.6 10.4H38.2" fill="none" stroke="#e0e0e0" stroke-width="1.1"/><path d="M48.8 2.4H56.8V9.6H48.8Z" fill="none" stroke="#d0d0d0" stroke-width="0.9"/><rect x="47.6" y="1.2" width="2.4" height="2.4" fill="#d0d0d0"/><rect x="55.6" y="1.2" width="2.4" height="2.4" fill="#d0d0d0"/><rect x="47.6" y="8.4" width="2.4" height="2.4" fill="#d0d0d0"/><rect x="55.6" y="8.4" width="2.4" height="2.4" fill="#d0d0d0"/><rect x="64.6" y="5" width="5.4" height="5.6" fill="#d8d8d8"/><path d="M67 4.6V1.4H72.6V8.6H70.6" fill="none" stroke="#d8d8d8" stroke-width="0.9"/></svg>
<div class="a" style="left:938.4px;top:354px;width:5.4px;height:10.4px;background:linear-gradient(#7a7a7a 0 45%,#3a3a3a 45%);border:1px solid #3a3a3a;border-radius:1px"></div>
<div class="a" style="left:762.8px;top:372.2px;width:107.6px;height:11.3px;background:linear-gradient(#686868,#5c5c5c);border:1px solid #3a3a3a;border-radius:2px"></div>
<div class="t" style="left:767.7px;top:374.65px;font-size:7.5px;color:#f0f0f0;transform:scaleX(1.026);">Transfert</div>
<svg class="a" style="left:864.5px;top:374.6px" width="5" height="7"><path d="M0.3 2.6L2.5 0.3L4.7 2.6ZM0.3 3.9L2.5 6.2L4.7 3.9Z" fill="#e0e0e0"/></svg>
<div class="t" style="left:876.1px;top:374.65px;font-size:7.5px;color:#e8e8e8;transform:scaleX(0.876);">Opacité :</div>
<div class="a" style="left:906.3px;top:372.2px;width:24.3px;height:11.3px;background:#393939;"></div>
<div class="t" style="left:909px;top:374.65px;font-size:7.5px;color:#f0f0f0;transform:scaleX(0.884);">100 %</div>
<div class="a" style="left:930.6px;top:372.2px;width:12.9px;height:11.3px;background:linear-gradient(#6a6a6a,#5e5e5e);border:1px solid #3a3a3a"></div>
<svg class="a" style="left:935px;top:377px" width="4" height="3"><path d="M0 0H4L2 2.2Z" fill="#e8e8e8"/></svg>
<div class="a" style="left:760px;top:386.3px;width:187px;height:1px;background:#3f3f3f;"></div>
<div class="t" style="left:763.2px;top:392.65px;font-size:7.5px;color:#e0e0e0;transform:scaleX(0.921);">Verrou :</div>
<svg class="a" style="left:793px;top:390px" width="55" height="13"><rect x="0.6" y="1.6" width="9" height="9" fill="#6a6a6a" stroke="#7a7a7a" stroke-width="0.6"/><path d="M0.6 1.6h3v3h-3zM6.6 1.6h3v3h-3zM3.6 4.6h3v3h-3zM0.6 7.6h3v3h-3zM6.6 7.6h3v3h-3z" fill="#9a9a9a"/><path d="M15 11C15.4 9 16.6 8 18 8.6C18 10.4 16.8 11.4 15 11Z" fill="#8c8c8c"/><path d="M17.4 9.2L24 2.4" stroke="#8c8c8c" stroke-width="1.3"/><path d="M34.3 1.4V11.4M29.3 6.4H39.3" stroke="#8c8c8c" stroke-width="0.9"/><path d="M34.3 0.8L32.8 2.6H35.8ZM34.3 12L32.8 10.2H35.8ZM28.7 6.4L30.5 4.9V7.9ZM39.9 6.4L38.1 4.9V7.9Z" fill="#8c8c8c"/><rect x="45.6" y="5.6" width="7.4" height="6" fill="#d8d8d8"/><path d="M47 5.8V4C47 1.6 51.6 1.6 51.6 4V5.8" fill="none" stroke="#d8d8d8" stroke-width="1.1"/></svg>
<div class="t" style="left:884px;top:392.65px;font-size:7.5px;color:#e0e0e0;transform:scaleX(0.865);">Fond :</div>
<div class="a" style="left:906.3px;top:390px;width:24.3px;height:12px;background:#393939;"></div>
<div class="t" style="left:909px;top:392.75px;font-size:7.5px;color:#f0f0f0;transform:scaleX(0.884);">100 %</div>
<div class="a" style="left:930.6px;top:390px;width:12.9px;height:12px;background:linear-gradient(#6a6a6a,#5e5e5e);border:1px solid #3a3a3a"></div>
<svg class="a" style="left:935px;top:395px" width="4" height="3"><path d="M0 0H4L2 2.2Z" fill="#e8e8e8"/></svg>
<div class="a" style="left:760px;top:406.2px;width:187px;height:1.2px;background:#3a3a3a;"></div>
<div class="a" style="left:760px;top:407.2px;width:176.7px;height:15.800000000000011px;background:#535353;border-bottom:1px solid #3d3d3d"></div>
<div class="a" style="left:779.4px;top:407.2px;width:1px;height:15.800000000000011px;background:#3d3d3d;"></div>
<svg class="a" style="left:765px;top:412.50px" width="10" height="6"><path d="M0.4 2.6C1.8 0.8 3.2 0.2 4.8 0.2C6.4 0.2 7.8 0.8 9.2 2.6C7.8 4.4 6.4 5 4.8 5C3.2 5 1.8 4.4 0.4 2.6Z" fill="#c4c4c4"/><circle cx="4.8" cy="2.6" r="1.5" fill="#3e3e3e"/><circle cx="4.4" cy="2.2" r="0.5" fill="#ccc"/></svg>
<svg class="a" style="left:783.5px;top:412.50px" width="4" height="6"><path d="M0.2 0L3.6 2.6L0.2 5.2Z" fill="#f0f0f0"/></svg>
<svg class="a" style="left:791.5px;top:411.30px" width="10" height="8"><path d="M0 0.6H3.6L4.4 1.6H9.6V7.6H0Z" fill="#e4e4e4"/><rect x="0" y="2" width="9.6" height="0.5" fill="#a8a8a8"/></svg>
<div class="t" style="left:809.4px;top:411.55px;font-size:7.5px;color:#f0f0f0;transform:scaleX(0.895);">Panel Information</div>
<div class="a" style="left:760px;top:423px;width:176.7px;height:15px;background:#535353;border-bottom:1px solid #3d3d3d"></div>
<div class="a" style="left:779.6px;top:423px;width:157.1px;height:14px;background:#6a7e96;"></div>
<div class="a" style="left:779.4px;top:423px;width:1px;height:15px;background:#3d3d3d;"></div>
<svg class="a" style="left:765px;top:427.90px" width="10" height="6"><path d="M0.4 2.6C1.8 0.8 3.2 0.2 4.8 0.2C6.4 0.2 7.8 0.8 9.2 2.6C7.8 4.4 6.4 5 4.8 5C3.2 5 1.8 4.4 0.4 2.6Z" fill="#c4c4c4"/><circle cx="4.8" cy="2.6" r="1.5" fill="#3e3e3e"/><circle cx="4.4" cy="2.2" r="0.5" fill="#ccc"/></svg>
<svg class="a" style="left:783.5px;top:427.90px" width="4" height="6"><path d="M0.2 0L3.6 2.6L0.2 5.2Z" fill="#f0f0f0"/></svg>
<svg class="a" style="left:791.5px;top:426.70px" width="10" height="8"><path d="M0 0.6H3.6L4.4 1.6H9.6V7.6H0Z" fill="#e4e4e4"/><rect x="0" y="2" width="9.6" height="0.5" fill="#a8a8a8"/></svg>
<div class="t" style="left:809.4px;top:426.95px;font-size:7.5px;color:#f0f0f0;transform:scaleX(0.893);">Panel Grand</div>
<div class="a" style="left:760px;top:438px;width:176.7px;height:15px;background:#535353;border-bottom:1px solid #3d3d3d"></div>
<div class="a" style="left:779.4px;top:438px;width:1px;height:15px;background:#3d3d3d;"></div>
<svg class="a" style="left:765px;top:442.90px" width="10" height="6"><path d="M0.4 2.6C1.8 0.8 3.2 0.2 4.8 0.2C6.4 0.2 7.8 0.8 9.2 2.6C7.8 4.4 6.4 5 4.8 5C3.2 5 1.8 4.4 0.4 2.6Z" fill="#c4c4c4"/><circle cx="4.8" cy="2.6" r="1.5" fill="#3e3e3e"/><circle cx="4.4" cy="2.2" r="0.5" fill="#ccc"/></svg>
<svg class="a" style="left:783.5px;top:442.90px" width="4" height="6"><path d="M0.2 0L3.6 2.6L0.2 5.2Z" fill="#f0f0f0"/></svg>
<svg class="a" style="left:791.5px;top:441.70px" width="10" height="8"><path d="M0 0.6H3.6L4.4 1.6H9.6V7.6H0Z" fill="#e4e4e4"/><rect x="0" y="2" width="9.6" height="0.5" fill="#a8a8a8"/></svg>
<div class="t" style="left:809.4px;top:441.95px;font-size:7.5px;color:#f0f0f0;transform:scaleX(0.902);">Panel 2 Ligne</div>
<div class="a" style="left:760px;top:453px;width:176.7px;height:14.600000000000023px;background:#535353;border-bottom:1px solid #3d3d3d"></div>
<div class="a" style="left:779.4px;top:453px;width:1px;height:14.600000000000023px;background:#3d3d3d;"></div>
<svg class="a" style="left:765px;top:457.70px" width="10" height="6"><path d="M0.4 2.6C1.8 0.8 3.2 0.2 4.8 0.2C6.4 0.2 7.8 0.8 9.2 2.6C7.8 4.4 6.4 5 4.8 5C3.2 5 1.8 4.4 0.4 2.6Z" fill="#c4c4c4"/><circle cx="4.8" cy="2.6" r="1.5" fill="#3e3e3e"/><circle cx="4.4" cy="2.2" r="0.5" fill="#ccc"/></svg>
<svg class="a" style="left:783.5px;top:457.70px" width="4" height="6"><path d="M0.2 0L3.6 2.6L0.2 5.2Z" fill="#f0f0f0"/></svg>
<svg class="a" style="left:791.5px;top:456.50px" width="10" height="8"><path d="M0 0.6H3.6L4.4 1.6H9.6V7.6H0Z" fill="#e4e4e4"/><rect x="0" y="2" width="9.6" height="0.5" fill="#a8a8a8"/></svg>
<div class="t" style="left:809.4px;top:456.75px;font-size:7.5px;color:#f0f0f0;transform:scaleX(0.889);">Panel Throttle</div>
<div class="a" style="left:936.7px;top:407.2px;width:9.6px;height:60.4px;background:#3c3c3c;"></div>
<div class="a" style="left:938.2px;top:419.5px;width:7px;height:26.7px;background:#6a6a6a;border-radius:3px"></div>
<svg class="a" style="left:939.5px;top:411px" width="5" height="3"><path d="M0 2.6H4.4L2.2 0Z" fill="#e8e8e8"/></svg>
<svg class="a" style="left:939.5px;top:461.6px" width="5" height="3"><path d="M0 0H4.4L2.2 2.6Z" fill="#e8e8e8"/></svg>
<div class="a" style="left:760px;top:467.6px;width:187px;height:13px;background:#535353;border-top:1px solid #3d3d3d"></div>
<svg class="a" style="left:800px;top:468px" width="140" height="13"><path d="M13.4 5H10.8C9.4 5 8.6 5.8 8.6 6.8C8.6 7.8 9.4 8.6 10.8 8.6H13.4M17.4 5H20C21.4 5 22.2 5.8 22.2 6.8C22.2 7.8 21.4 8.6 20 8.6H17.4M12.4 6.8H18.4" fill="none" stroke="#a8a8a8" stroke-width="1"/><text x="29.6" y="10.2" font-family="Liberation Serif" font-style="italic" font-size="9.5" fill="#d8d8d8">fx</text><rect x="37.6" y="9.8" width="1.2" height="1.2" fill="#d8d8d8"/><rect x="48.6" y="3" width="8.8" height="8" fill="#e0e0e0"/><circle cx="53" cy="7" r="2.4" fill="#535353"/><circle cx="70" cy="6.8" r="3.6" fill="#d8d8d8"/><path d="M70 3.2A3.6 3.6 0 0 0 70 10.4Z" fill="#535353" transform="rotate(40 70 6.8)"/><rect x="74.6" y="9.8" width="1.2" height="1.2" fill="#d8d8d8"/><path d="M84 3.4H87.2L88 4.4H92.6V10.8H84Z" fill="#d8d8d8"/><path d="M102 5.2H108.6V11.2H104.6" fill="none" stroke="#d8d8d8" stroke-width="0"/><rect x="103.6" y="3" width="6.6" height="8" fill="#d8d8d8"/><path d="M102 6.8L104.4 4.4V10.4H102Z" fill="#535353"/><rect x="101.6" y="4.4" width="2.6" height="6.6" fill="none" stroke="#d8d8d8" stroke-width="0"/><path d="M118.6 4.4H126.6M120.6 4.2V2.8H124.6V4.2M119.6 5.2V11.2H125.6V5.2M121.6 6.4V10.2M123.6 6.4V10.2" fill="none" stroke="#d0d0d0" stroke-width="1"/></svg>
</body></html>
